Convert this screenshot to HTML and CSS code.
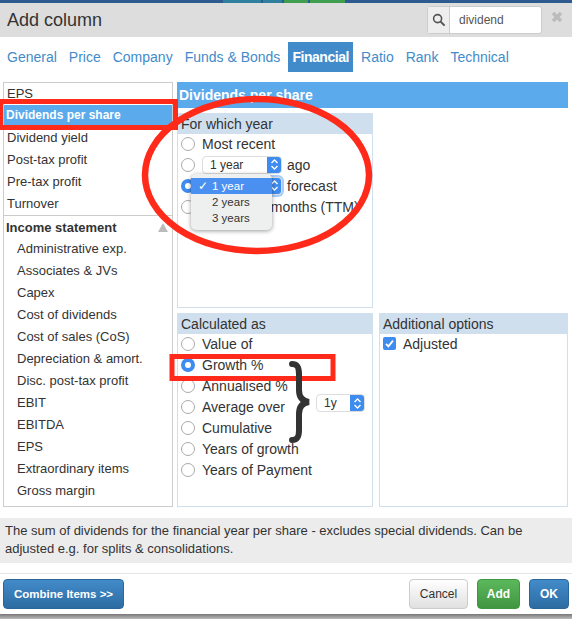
FILE: index.html
```html
<!DOCTYPE html>
<html lang="en">
<head>
    <meta charset="UTF-8">
    <title>Add column</title>
    <link rel="stylesheet" href="styles.css">
</head>
<body>
<div class="strip">
    <span class="bit bit-a"></span><span class="bit bit-b"></span><span class="bit bit-c"></span><span class="bit bit-d"></span>
</div>
<div class="dialog">
    <div class="head">
        <h1>Add column</h1>
        <div class="search">
            <span class="search-icon">
                <svg width="14" height="14" viewBox="0 0 14 14"><circle cx="5.6" cy="5.6" r="4" fill="none" stroke="#555" stroke-width="1.6"/><path d="M8.6 8.6l4 4" stroke="#555" stroke-width="2"/></svg>
            </span>
            <span class="search-text">dividend</span>
        </div>
        <svg class="close" width="12" height="12" viewBox="0 0 12 12"><path d="M2 2l8 8M10 2l-8 8" stroke="#bbb" stroke-width="3.4"/></svg>
    </div>

    <ul class="tabs">
        <li><a href="#">General</a></li>
        <li><a href="#">Price</a></li>
        <li><a href="#">Company</a></li>
        <li><a href="#">Funds &amp; Bonds</a></li>
        <li><a href="#" class="current">Financial</a></li>
        <li><a href="#">Ratio</a></li>
        <li><a href="#">Rank</a></li>
        <li><a href="#">Technical</a></li>
    </ul>

    <div class="main">
        <div class="list">
            <ul class="top-items">
                <li>EPS</li>
                <li class="selected">Dividends per share</li>
                <li>Dividend yield</li>
                <li>Post-tax profit</li>
                <li>Pre-tax profit</li>
                <li>Turnover</li>
            </ul>
            <div class="group">Income statement <span class="arrow"></span></div>
            <ul class="sub-items">
                <li>Administrative exp.</li>
                <li>Associates &amp; JVs</li>
                <li>Capex</li>
                <li>Cost of dividends</li>
                <li>Cost of sales (CoS)</li>
                <li>Depreciation &amp; amort.</li>
                <li>Disc. post-tax profit</li>
                <li>EBIT</li>
                <li>EBITDA</li>
                <li>EPS</li>
                <li>Extraordinary items</li>
                <li>Gross margin</li>
            </ul>
        </div>

        <div class="detail">
            <div class="detail-title">Dividends per share</div>
            <div class="boxes">
                <div class="box">
                    <div class="box-title">For which year</div>
                    <div class="rows">
                        <div class="row"><span class="radio"></span>Most recent</div>
                        <div class="row"><span class="radio"></span>
                            <span class="select select-year">1 year<span class="spin"><svg width="9" height="13" viewBox="0 0 9 13"><path d="M1.5 5l3-3 3 3M1.5 8l3 3 3-3" fill="none" stroke="#fff" stroke-width="1.4"/></svg></span></span>
                            <span class="after">ago</span></div>
                        <div class="row"><span class="radio on"></span>
                            <span class="select select-year focus"><span class="spin"><svg width="9" height="13" viewBox="0 0 9 13"><path d="M1.5 5l3-3 3 3M1.5 8l3 3 3-3" fill="none" stroke="#fff" stroke-width="1.4"/></svg></span></span>
                            <span class="after">forecast</span></div>
                        <div class="row"><span class="radio"></span>Trailing 12 months (TTM)</div>
                    </div>
                    <ul class="popup">
                        <li class="active"><span class="tick">✓</span>1 year</li>
                        <li>2 years</li>
                        <li>3 years</li>
                    </ul>
                </div>
                <div class="box spacer"></div>
                <div class="box calc">
                    <div class="box-title">Calculated as</div>
                    <div class="rows">
                        <div class="row"><span class="radio"></span>Value of</div>
                        <div class="row"><span class="radio on"></span>Growth %</div>
                        <div class="row"><span class="radio"></span>Annualised %</div>
                        <div class="row"><span class="radio"></span>Average over</div>
                        <div class="row"><span class="radio"></span>Cumulative</div>
                        <div class="row"><span class="radio"></span>Years of growth</div>
                        <div class="row"><span class="radio"></span>Years of Payment</div>
                    </div>
                    <span class="select select-period">1y<span class="spin"><svg width="9" height="13" viewBox="0 0 9 13"><path d="M1.5 5l3-3 3 3M1.5 8l3 3 3-3" fill="none" stroke="#fff" stroke-width="1.4"/></svg></span></span>
                </div>
                <div class="box">
                    <div class="box-title">Additional options</div>
                    <div class="rows">
                        <div class="row"><span class="check"><svg width="11" height="11" viewBox="0 0 11 11"><path d="M2 5.8l2.4 2.6L9 2.6" fill="none" stroke="#fff" stroke-width="1.8"/></svg></span>Adjusted</div>
                    </div>
                </div>
            </div>
        </div>
    </div>

    <p class="note">The sum of dividends for the financial year per share - excludes special dividends. Can be adjusted e.g. for splits &amp; consolidations.</p>

    <div class="foot">
        <button class="btn btn-blue">Combine Items &gt;&gt;</button>
        <div class="foot-right">
            <button class="btn btn-plain">Cancel</button>
            <button class="btn btn-green">Add</button>
            <button class="btn btn-blue">OK</button>
        </div>
    </div>
</div>
<div class="backdrop"></div>

<!-- red marks drawn over the screenshot -->
<svg class="marks" width="572" height="619" viewBox="0 0 572 619">
    <ellipse cx="257" cy="175" rx="112" ry="76" fill="none" stroke="#ff2a1a" stroke-width="6.5"/>
    <rect x="0.5" y="101.5" width="175" height="26" fill="none" stroke="#ff2a1a" stroke-width="5"/>
    <rect x="172" y="356.5" width="161" height="22" fill="none" stroke="#ff2a1a" stroke-width="5"/>
    <path d="M292 364c6 0 7 4 7 10v16c0 6 2 11 10 12c-8 1-10 6-10 12v16c0 6-1 10-7 10" fill="none" stroke="#333" stroke-width="6" stroke-linecap="round"/>
</svg>
</body>
</html>
```

FILE: styles.css
```css
* {
    margin: 0;
    padding: 0;
    box-sizing: border-box;
}

ul {
    list-style: none;
}

body {
    position: relative;
    height: 619px;
    overflow: hidden;
    background: #fff;
    font-family: "Liberation Sans", Arial, sans-serif;
    font-size: 14px;
    color: #333;
}

.strip { /*top edge of the page behind the dialog*/
    display: flex;
    height: 3px;
    padding-left: 223px;
    background: #2d5b90;
}

.bit {
    height: 3px;
    margin-right: 2px;
}

.bit-a { width: 38px; background: #2f7f9f; }
.bit-b { width: 19px; background: #2f7f9f; }
.bit-c { width: 24px; background: #3f9f4f; }
.bit-d { width: 35px; background: #3f9f4f; }

.dialog {
    display: flex;
    flex-direction: column;
    height: 611px;
}

.head {
    display: flex;
    align-items: center;
    height: 34px;
    padding-left: 7px;
    background: #dddddd;
}

.head h1 {
    flex: 1;
    font-size: 18px;
    font-weight: normal;
}

.search {
    display: flex;
    width: 115px;
    height: 28px;
    border: 1px solid #ccc;
    border-radius: 3px;
    background: #fff;
}

.search-icon {
    display: flex;
    align-items: center;
    justify-content: center;
    width: 22px;
    background: #eee;
    border-right: 1px solid #ccc;
}

.search-text {
    padding-left: 9px;
    line-height: 26px;
    font-size: 12px;
    color: #555;
}

.close {
    margin: 0 9px 6px 9px;
}

.tabs {
    display: flex;
    gap: 4px;
    height: 30px;
    margin: 5px 0 10px;
    padding-left: 3px;
}

.tabs a {
    display: block;
    padding: 0 4px;
    line-height: 30px;
    color: #428bca;
    text-decoration: none;
}

.tabs a.current {
    background: #428bca;
    color: #fff;
    font-weight: bold;
    letter-spacing: -0.45px;
}

.main {
    display: flex;
    height: 425px;
}

.list {
    width: 170px;
    margin-left: 3px;
    border: 1px solid #ccc;
    overflow: hidden;
}

.list li {
    height: 22px;
    line-height: 21px;
    font-size: 13px;
}

.top-items {
    border-bottom: 1px solid #ccc;
}

.top-items li {
    padding-left: 3px;
}

.top-items li.selected {
    padding-left: 2px;
    background: #5aaaec;
    color: #fff;
    font-size: 12px;
    font-weight: bold;
}

.group {
    display: flex;
    justify-content: space-between;
    align-items: center;
    height: 22px;
    padding: 0 4px 0 2px;
    font-size: 13px;
    font-weight: bold;
}

.arrow {
    width: 0;
    height: 0;
    border-left: 5px solid transparent;
    border-right: 5px solid transparent;
    border-bottom: 9px solid #bbb;
}

.sub-items li {
    padding-left: 13px;
}

.detail {
    flex: 1;
    margin: 0 4px 0 4px;
}

.detail-title {
    height: 26px;
    padding-left: 2px;
    background: #5aaaec;
    color: #fff;
    font-weight: bold;
    line-height: 26px;
}

.boxes {
    display: grid;
    grid-template-columns: 196px 189px;
    grid-template-rows: 195px 194px;
    column-gap: 6px;
    row-gap: 5px;
    margin-top: 5px;
}

.box {
    position: relative;
    border: 1px solid #cfdfee;
}

.spacer {
    border: 0;
}

.box-title {
    height: 21px;
    margin: -1px -1px 0;
    padding-left: 4px;
    background: #cfdfee;
    line-height: 22px;
}

.rows {
    margin-top: -1px;
    padding-left: 3px;
}

.row {
    display: flex;
    align-items: center;
    height: 21px;
}

.radio {
    flex: none;
    width: 14px;
    height: 14px;
    margin-right: 7px;
    border: 1px solid #aaa;
    border-radius: 50%;
    background: #fff;
}

.radio.on {
    border: 4.5px solid #3f8cf0;
    background: #fff;
}

.check {
    display: flex;
    align-items: center;
    justify-content: center;
    width: 13px;
    height: 13px;
    margin-right: 7px;
    border-radius: 2px;
    background: #3f8cf0;
}

.select {
    position: relative;
    display: inline-block;
    height: 18px;
    border: 1px solid #ddd;
    border-radius: 4px;
    background: #fff;
    font-size: 12px;
    line-height: 16px;
    padding-left: 7px;
    overflow: hidden;
}

.select-year {
    flex: none;
    width: 80px;
}

.select.focus {
    box-shadow: 0 0 0 2px #a9cdf7;
}

.select-period {
    position: absolute;
    left: 138px;
    top: 80px;
    width: 49px;
}

.spin {
    position: absolute;
    top: -1px;
    right: -1px;
    display: flex;
    align-items: center;
    justify-content: center;
    width: 15px;
    height: 18px;
    background: #3f8cf0;
}

.after {
    margin-left: 5px;
}

.popup {
    position: absolute;
    left: 13px;
    top: 60px;
    width: 81px;
    height: 56px;
    padding-top: 4px;
    border-radius: 5px;
    background: #eef0ef;
    box-shadow: 0 1px 4px rgba(0, 0, 0, 0.4);
    font-size: 11.5px;
}

.popup li {
    height: 16px;
    padding-left: 21px;
    line-height: 16px;
}

.popup li.active {
    position: relative;
    background: #4a90f0;
    color: #fff;
}

.tick {
    position: absolute;
    left: 7px;
}

.note {
    height: 45px;
    margin-top: 11px;
    padding: 4px 5px 0;
    background: #ececec;
    font-size: 13px;
    line-height: 17.5px;
}

.foot {
    display: flex;
    justify-content: space-between;
    height: 41px;
    margin-top: 10px;
    padding: 5px 3px 0;
    border-top: 1px solid #e5e5e5;
}

.foot-right {
    display: flex;
    gap: 9px;
}

.btn {
    height: 30px;
    border-radius: 4px;
    font-family: inherit;
    font-size: 12px;
    color: #fff;
    font-weight: bold;
}

.foot > .btn-blue {
    font-size: 11.5px;
}

.btn-blue {
    padding: 0 10px;
    min-width: 40px;
    border: 1px solid #2b669a;
    background: linear-gradient(#428bca, #2d6ca2);
}

.btn-green {
    width: 43px;
    border: 1px solid #419641;
    background: linear-gradient(#5cb85c, #419641);
}

.btn-plain {
    width: 59px;
    border: 1px solid #ccc;
    background: linear-gradient(#fff, #e0e0e0);
    color: #333;
    font-weight: normal;
}

.backdrop {
    height: 5px;
    background: linear-gradient(#777, #bbb);
}

.marks {
    position: absolute;
    left: 0;
    top: 0;
    pointer-events: none;
}
```
